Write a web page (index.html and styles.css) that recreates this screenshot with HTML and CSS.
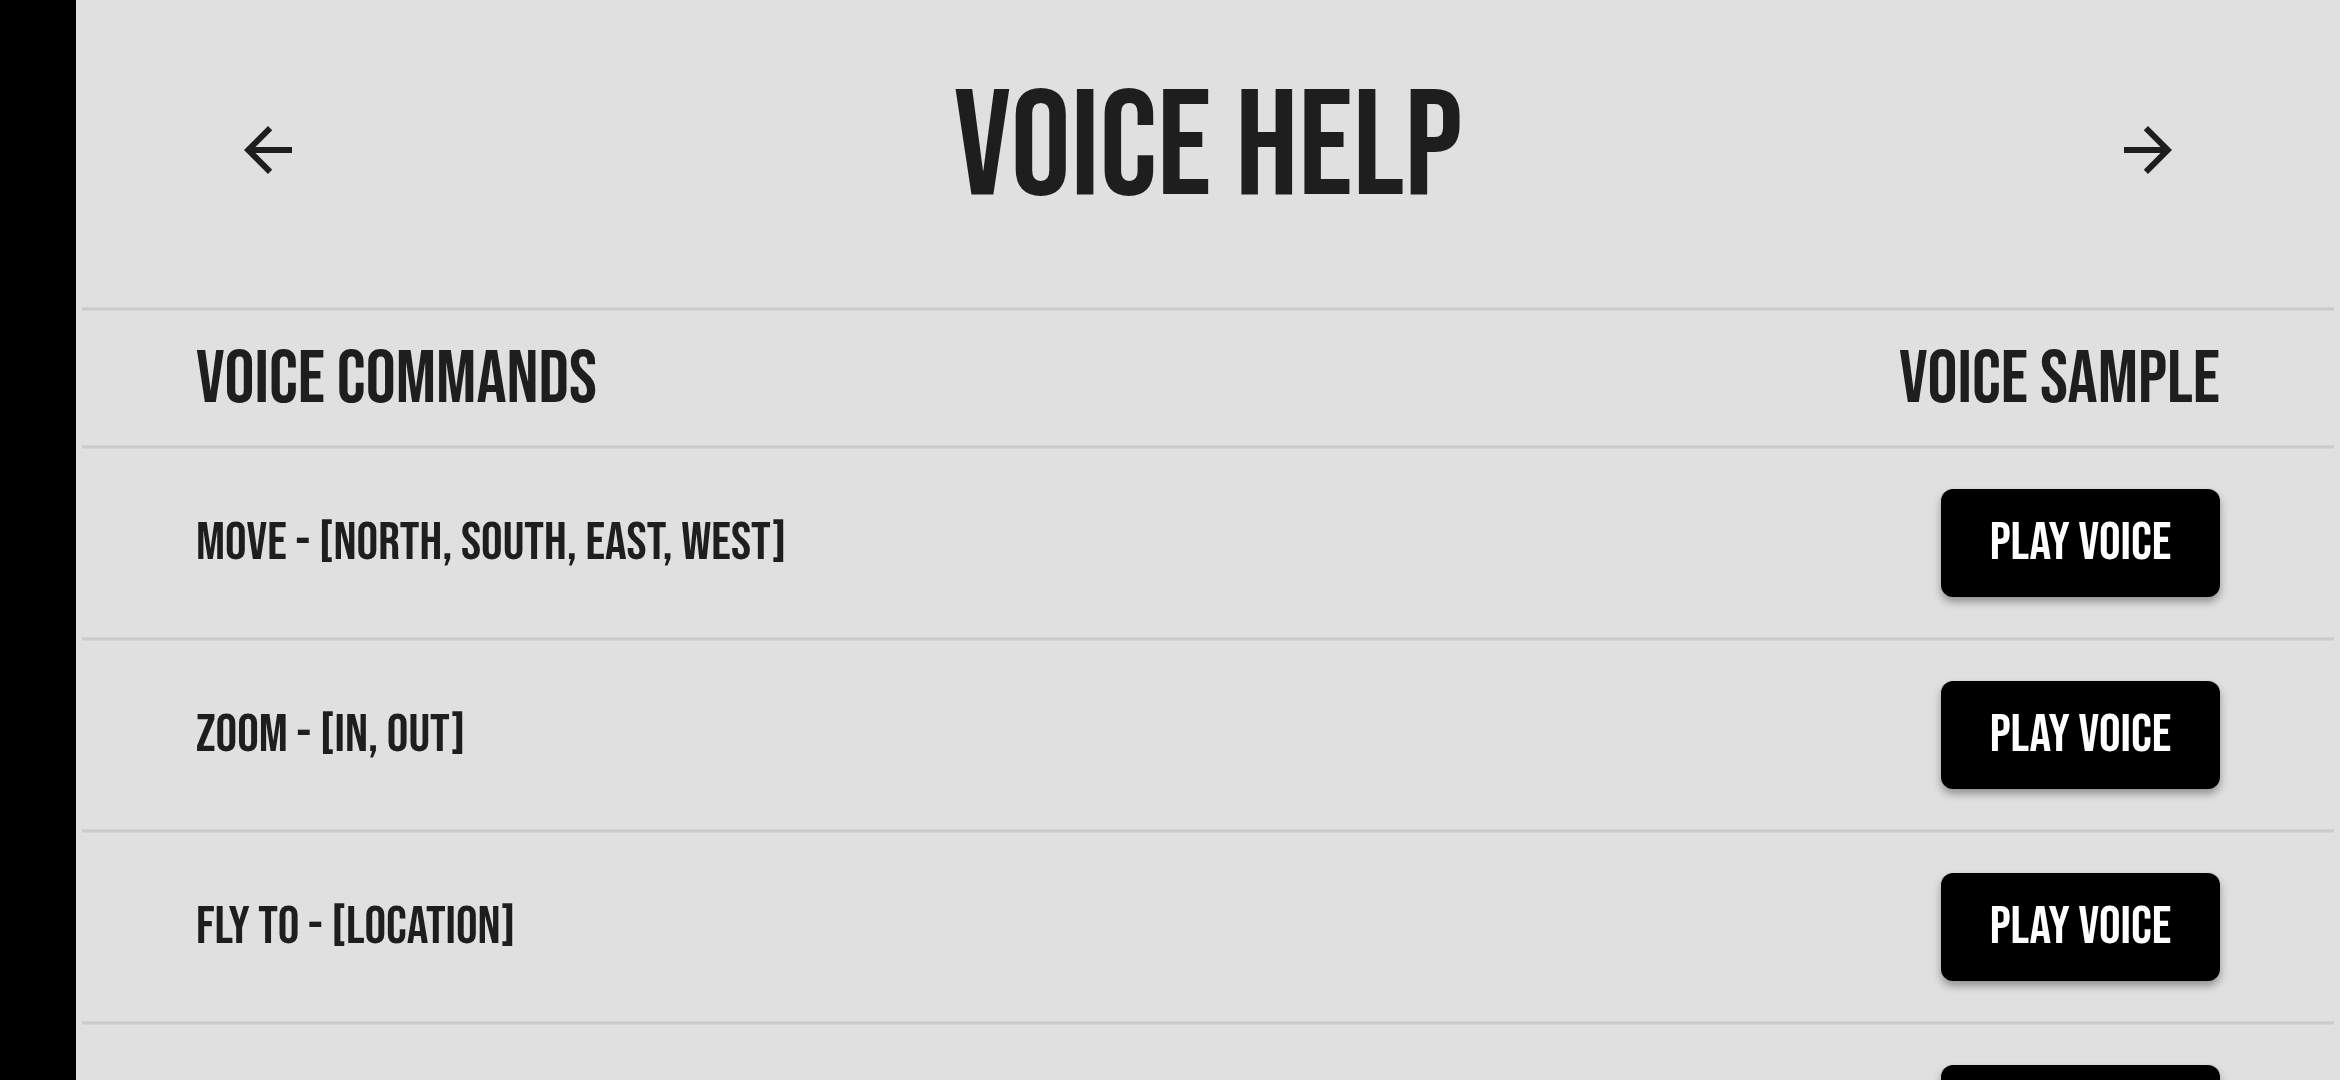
FILE: index.html
```
<!DOCTYPE html>
<html lang="en">
<head>
<meta charset="utf-8">
<meta name="viewport" content="width=device-width, initial-scale=1">
<title>Voice Help</title>
<link rel="stylesheet" href="styles.css">
</head>
<body>
<main class="screen">
  <header class="top-bar">
    <button class="icon-button" type="button" aria-label="Back">
      <svg class="icon" viewBox="0 0 24 24" aria-hidden="true"><path d="M20 11H7.83l5.59-5.59L12 4l-8 8 8 8 1.41-1.41L7.83 13H20v-2z"/></svg>
    </button>
    <h1 class="title">Voice Help</h1>
    <button class="icon-button" type="button" aria-label="Next">
      <svg class="icon" viewBox="0 0 24 24" aria-hidden="true"><path d="M12 4l-1.41 1.41L16.17 11H4v2h12.17l-5.58 5.59L12 20l8-8z"/></svg>
    </button>
  </header>
  <div class="content">
    <table class="commands">
      <thead>
        <tr><th scope="col">Voice Commands</th><th scope="col">Voice Sample</th></tr>
      </thead>
      <tbody>
        <tr><td>Move - [North, South, East, West]</td><td><button class="play" type="button">Play Voice</button></td></tr>
        <tr><td>Zoom - [In, Out]</td><td><button class="play" type="button">Play Voice</button></td></tr>
        <tr><td>Fly to - [Location]</td><td><button class="play" type="button">Play Voice</button></td></tr>
        <tr><td></td><td><button class="play" type="button" aria-label="Play Voice"></button></td></tr>
      </tbody>
    </table>
  </div>
</main>
</body>
</html>
```
FILE: styles.css
```
* {
  box-sizing: border-box;
}

body {
  height: 100vh;
  margin: 0;
  padding-left: 76px;
  overflow: hidden;
  background: #000;
  color: #1e1e1e;
  font-family: "Bebas Neue", "Roboto Condensed", sans-serif;
}

button {
  border: 0;
  font: inherit;
}

.screen {
  height: 100vh;
  overflow: hidden;
  background: #e0e0e0;
}

.top-bar {
  display: flex;
  align-items: center;
  justify-content: space-between;
  padding: 60px 120px;
}

.icon-button {
  display: flex;
  padding: 36px;
  background: none;
  color: inherit;
}

.icon {
  width: 72px;
  height: 72px;
  fill: currentColor;
}

.title {
  margin: 0;
  font-size: 150px;
  font-weight: 400;
  line-height: 180px;
}

.content {
  padding: 7px 6px;
}

.commands {
  width: 100%;
  border-collapse: separate;
  border-spacing: 0;
}

/* Row divider: a soft edge on both sides of a darker core */
.commands th,
.commands td {
  padding: 4px 114px 0;
  background: linear-gradient(#d5d5d5 1px, #cbcbcb 1px, #cbcbcb 3px, #d5d5d5 3px) top / 100% 4px no-repeat;
  font-weight: 400;
  text-align: left;
}

.commands th:last-child,
.commands td:last-child {
  text-align: right;
}

.commands th {
  height: 138px;
  padding-top: 8px;
  font-size: 75px;
  line-height: 90px;
}

.commands td {
  height: 192px;
  font-size: 54px;
  line-height: 64px;
}

.play {
  min-width: 279px;
  min-height: 108px;
  padding: 22px 48px;
  border-radius: 12px;
  background: #000;
  box-shadow: 0 5px 8px rgba(0, 0, 0, 0.35);
  color: #fff;
  line-height: 64px;
  vertical-align: middle;
}
```
